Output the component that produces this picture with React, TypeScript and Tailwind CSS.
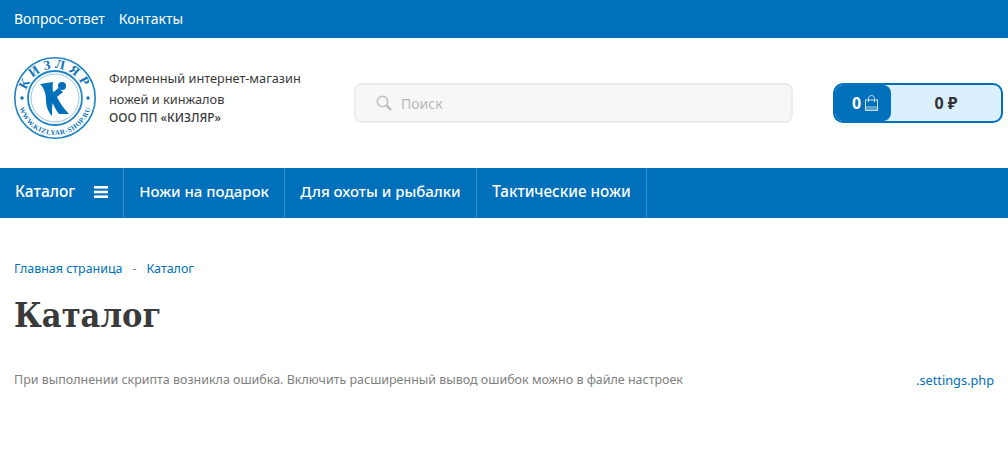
const navItems = [
  { label: 'Ножи на подарок', className: 'w-[161px]' },
  { label: 'Для охоты и рыбалки', className: 'w-[192px]' },
  { label: 'Тактические ножи', className: 'w-[170px] text-[15.25px]' },
];

const Logo = () => (
  <svg width="84" height="84" viewBox="0 0 84 84" className="shrink-0">
    <defs>
      <path id="arcTop" d="M 12.5 42 A 29.5 29.5 0 0 1 71.5 42" />
      <path id="arcBottom" d="M 5 42 A 37 37 0 0 0 79 42" />
    </defs>
    <circle cx="42" cy="42" r="40.2" fill="#fff" stroke="#1f84c6" strokeWidth="1.6" />
    <circle cx="42" cy="42" r="27" fill="#fff" stroke="#1f84c6" strokeWidth="1.8" />
    <circle cx="42" cy="42" r="24" fill="#fff" stroke="#7db8df" strokeWidth="0.8" />
    <text fill="#0d72b9" fontFamily="'Liberation Serif', serif" fontSize="13" fontWeight="700" letterSpacing="4">
      <textPath href="#arcTop" startOffset="50%" textAnchor="middle">КИЗЛЯР</textPath>
    </text>
    <text fill="#0d72b9" fontFamily="'Liberation Serif', serif" fontSize="7" fontWeight="700" letterSpacing="0.5">
      <textPath href="#arcBottom" startOffset="50%" textAnchor="middle">WWW.KIZLYAR-SHOP.RU</textPath>
    </text>
    <circle cx="9" cy="42" r="1.7" fill="#0d72b9" />
    <circle cx="75" cy="42" r="1.7" fill="#0d72b9" />
    <path
      fill="#0070ba"
      d="M27 28 L40 26 C39.5 30 39.5 33 40 36 C42 35 44 33.5 45 32 L50 36 C47 38.5 45 40 44 41 C47 47 51 53 56 58 L46 58 C43 54 41 50 39.5 47 C39 52 39 56 39 60 C35 56 33 50 33 44 C33 38 31 32 27 28 Z"
    />
    <circle cx="49" cy="30" r="4" fill="#0070ba" />
  </svg>
);

const BagIcon = () => (
  <svg width="13" height="16" viewBox="0 0 13 16" fill="none">
    <rect x="0.5" y="11" width="12" height="4.5" fill="#fff" fillOpacity="0.35" />
    <rect x="0.5" y="5" width="12" height="10.5" stroke="#cfe3f2" />
    <path d="M3.5 7 V3.5 C3.5 1.5 5 0.5 6.5 0.5 C8 0.5 9.5 1.5 9.5 3.5 V7" stroke="#cfe3f2" />
  </svg>
);

const SearchIcon = () => (
  <svg width="16" height="16" viewBox="0 0 16 16" fill="none">
    <circle cx="6.5" cy="6.5" r="5.2" stroke="#c4c4c4" strokeWidth="1.6" />
    <path d="M10.5 10.5 L15 15" stroke="#b5b5b5" strokeWidth="2.4" />
  </svg>
);

const BarsIcon = () => (
  <svg width="14" height="12" viewBox="0 0 14 12" fill="#fff">
    <rect width="14" height="2.6" />
    <rect y="4.7" width="14" height="2.6" />
    <rect y="9.4" width="14" height="2.6" />
  </svg>
);

export default function App() {
  return (
    <div className="min-h-[470px] bg-white font-['Noto_Sans',sans-serif] text-[#333]">
      <div className="flex h-[38px] items-center gap-[14px] bg-[#0070ba] px-[14px] pb-[2px] text-[14px] text-white">
        <a>Вопрос-ответ</a>
        <a>Контакты</a>
      </div>

      <header className="flex h-[130px] items-center pl-[13px] pr-[5px]">
        <div className="mb-[10px] flex w-[341px] items-center gap-[12px]">
          <Logo />
          <div className="mb-[2px] text-[12.75px] text-[#3a3a3a]">
            <div className="leading-[21px]">Фирменный интернет-магазин</div>
            <div className="leading-[21px]">ножей и кинжалов</div>
            <div className="text-[12px] font-medium leading-[16px]">ООО ПП «КИЗЛЯР»</div>
          </div>
        </div>
        <div className="flex h-[40px] w-[439px] items-center gap-[9px] rounded-[8px] border-2 border-[#ececec] bg-[#f7f7f7] pl-[20px] text-[14px] text-[#b9b9b9]">
          <SearchIcon />
          <span>Поиск</span>
        </div>
        <div className="ml-[40px] flex h-[40px] w-[170px] overflow-hidden rounded-[10px] border-2 border-[#0070ba] bg-[#daf0ff]">
          <div className="flex w-[56px] items-center justify-center gap-[4px] rounded-r-[8px] bg-[#0070ba] pl-[4px] text-[16px] font-bold text-white">
            <span>0</span>
            <BagIcon />
          </div>
          <div className="flex flex-1 items-center justify-center text-[16px] font-bold text-[#333]">0 ₽</div>
        </div>
      </header>

      <nav className="flex h-[50px] bg-[#0070ba] text-[15px] font-medium text-white">
        <div className="flex items-center gap-[18px] border-r border-[#3a8fca] pl-[15px] pr-[15px] pb-[3px]">
          <span className="w-[61px] text-[15.5px]">Каталог</span>
          <BarsIcon />
        </div>
        {navItems.map((item) => (
          <div key={item.label} className={`flex items-center justify-center whitespace-nowrap border-r border-[#3a8fca] pb-[3px] ${item.className}`}>
            {item.label}
          </div>
        ))}
      </nav>

      <main className="px-[14px] pt-[43px]">
        <div className="flex gap-[10px] text-[12.45px] leading-[16px] text-[#0070ba]">
          <a>Главная страница</a>
          <span className="text-[#777]">-</span>
          <a>Каталог</a>
        </div>
        <h1 className="mt-[16px] font-['DejaVu_Serif_Condensed','DejaVu_Serif',serif] text-[34px] font-bold leading-[44px] text-[#3a3a3a]">Каталог</h1>
        <div className="mt-[35px] flex justify-between text-[12.48px] leading-[16px] text-[#808080]">
          <span>При выполнении скрипта возникла ошибка. Включить расширенный вывод ошибок можно в файле настроек</span>
          <a className="text-[12.75px] text-[#0070ba]">.settings.php</a>
        </div>
      </main>
    </div>
  );
}
